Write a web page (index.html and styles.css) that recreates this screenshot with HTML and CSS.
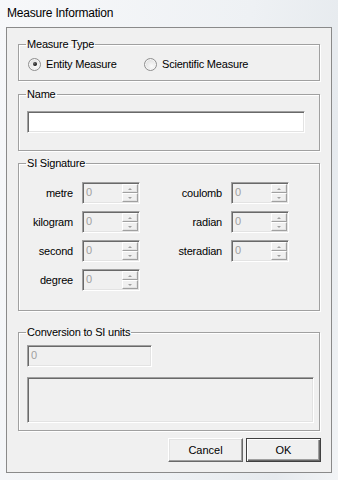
FILE: index.html
```html
<!DOCTYPE html>
<html lang="en">
<head>
    <meta charset="UTF-8">
    <title>Measure Information</title>
    <link rel="stylesheet" href="styles.css">
</head>
<body>
    <div class="window">
        <div class="titlebar">Measure Information</div>
        <div class="client">
            <fieldset class="group">
                <legend>Measure Type</legend>
                <div class="radios">
                    <label class="radio"><span class="radio-mark checked"></span>Entity Measure</label>
                    <label class="radio"><span class="radio-mark"></span>Scientific Measure</label>
                </div>
            </fieldset>

            <fieldset class="group group-name">
                <legend>Name</legend>
                <div class="textbox name-box"></div>
            </fieldset>

            <fieldset class="group group-si">
                <legend>SI Signature</legend>
                <div class="si-grid">
                    <span class="si-label">metre</span>
                    <div class="spin"><span class="spin-value">0</span><span class="spin-btns"><span class="spin-up"></span><span class="spin-down"></span></span></div>
                    <span class="si-label">coulomb</span>
                    <div class="spin"><span class="spin-value">0</span><span class="spin-btns"><span class="spin-up"></span><span class="spin-down"></span></span></div>

                    <span class="si-label">kilogram</span>
                    <div class="spin"><span class="spin-value">0</span><span class="spin-btns"><span class="spin-up"></span><span class="spin-down"></span></span></div>
                    <span class="si-label">radian</span>
                    <div class="spin"><span class="spin-value">0</span><span class="spin-btns"><span class="spin-up"></span><span class="spin-down"></span></span></div>

                    <span class="si-label">second</span>
                    <div class="spin"><span class="spin-value">0</span><span class="spin-btns"><span class="spin-up"></span><span class="spin-down"></span></span></div>
                    <span class="si-label">steradian</span>
                    <div class="spin"><span class="spin-value">0</span><span class="spin-btns"><span class="spin-up"></span><span class="spin-down"></span></span></div>

                    <span class="si-label">degree</span>
                    <div class="spin"><span class="spin-value">0</span><span class="spin-btns"><span class="spin-up"></span><span class="spin-down"></span></span></div>
                </div>
            </fieldset>

            <fieldset class="group group-conv">
                <legend>Conversion to SI units</legend>
                <div class="textbox disabled conv-value">0</div>
                <div class="textbox disabled conv-text"></div>
            </fieldset>

            <div class="buttons">
                <button class="btn">Cancel</button>
                <button class="btn btn-default">OK</button>
            </div>
        </div>
    </div>
</body>
</html>
```

FILE: styles.css
```css
body {
    margin: 0;
    padding: 0;
    font-family: "Liberation Sans", Arial, sans-serif;
    font-size: 11px;
    letter-spacing: -0.2px;
    color: #000;
}
.window {
    width: 338px;
    height: 480px;
    background: linear-gradient(100deg, #f7f8fa 0%, #eef1f4 60%, #e6eaee 85%, #f2f4f6 100%);
}
.titlebar {
    height: 27px;
    line-height: 26px;
    padding-left: 7px;
    font-size: 12px;
    letter-spacing: -0.2px;
}
.client {
    box-sizing: border-box;
    height: 446px;
    margin: 0 6px;
    padding: 10px 11px 0 11px;
    background: #f0f0f0;
    border: 1px solid #8a8a8a;
}
.group {
    margin: 0;
    padding: 0;
    border: 1px solid #a0a0a0;
    box-shadow: 1px 1px 0 #fff, inset 1px 1px 0 #fff;
    min-inline-size: 0;
}
.group legend {
    margin-left: 7px;
    padding: 0 1px;
    line-height: 13px;
    height: 13px;
}
.radios {
    display: grid;
    grid-template-columns: 116px auto;
    align-items: center;
    height: 26px;
    padding-left: 9px;
    margin-bottom: 3px;
}
.radio {
    display: flex;
    align-items: center;
    gap: 5px;
}
.radio-mark {
    position: relative;
    box-sizing: border-box;
    width: 13px;
    height: 13px;
    border-radius: 50%;
    border: 1px solid #8f8f8f;
    background: radial-gradient(circle at 60% 65%, #fbfbfb 0%, #e4e4e4 60%, #cfcfcf 100%);
    box-shadow: inset 0 0 0 1px #f6f6f6;
}
.radio-mark.checked::after {
    content: "";
    position: absolute;
    left: 3.5px;
    top: 3.5px;
    width: 4px;
    height: 4px;
    border-radius: 50%;
    background: radial-gradient(circle at 35% 35%, #6a6a6a, #111 70%);
}
.textbox {
    box-sizing: border-box;
    height: 22px;
    margin-left: 8px;
    background: #fff;
    border: 1px solid;
    border-color: #a0a0a0 #fff #fff #a0a0a0;
    box-shadow: inset 1px 1px 0 #696969, inset -1px -1px 0 #e3e3e3;
}
.textbox.disabled {
    background: #f0f0f0;
    color: #a0a0a0;
}
.name-box {
    width: 278px;
    margin-top: 10px;
    margin-bottom: 17px;
}
.si-grid {
    display: grid;
    grid-template-columns: 63px 58px 91px 58px;
    grid-auto-rows: 22px;
    row-gap: 7px;
    align-items: center;
    margin-top: 12px;
    margin-bottom: 19px;
}
.si-label {
    text-align: right;
    padding-right: 9px;
}
.spin {
    box-sizing: border-box;
    display: flex;
    height: 22px;
    background: #f0f0f0;
    border: 1px solid;
    border-color: #a0a0a0 #fff #fff #a0a0a0;
    box-shadow: inset 1px 1px 0 #696969, inset -1px -1px 0 #e3e3e3;
    padding: 1px;
}
.spin-value {
    flex: 1;
    color: #a0a0a0;
    padding-left: 2px;
    line-height: 17px;
}
.spin-btns {
    display: flex;
    flex-direction: column;
    width: 16px;
}
.spin-up, .spin-down {
    position: relative;
    flex: 1;
    box-sizing: border-box;
    background: #f0f0f0;
    border: 1px solid;
    border-color: #fff #a0a0a0 #a0a0a0 #fff;
    box-shadow: inset -1px -1px 0 #e3e3e3;
}
.spin-up::after, .spin-down::after {
    content: "";
    position: absolute;
    left: 5px;
    top: 3px;
    border-left: 2px solid transparent;
    border-right: 2px solid transparent;
}
.spin-up::after {
    border-bottom: 2px solid #a0a0a0;
}
.spin-down::after {
    border-top: 2px solid #a0a0a0;
}
.conv-value {
    width: 125px;
    margin-top: 6px;
    line-height: 19px;
    padding-left: 3px;
}
.conv-text {
    width: 287px;
    height: 46px;
    margin-top: 10px;
    margin-bottom: 7px;
}
.group-name {
    margin-top: 7px;
}
.group-si {
    margin-top: 6px;
}
.group-conv {
    margin-top: 15px;
}
.buttons {
    display: flex;
    justify-content: flex-end;
    gap: 3px;
    margin-top: 7px;
    margin-right: -1px;
}
.btn {
    box-sizing: border-box;
    width: 75px;
    height: 24px;
    padding: 0;
    font-family: "Liberation Sans", Arial, sans-serif;
    font-size: 11px;
    color: #000;
    background: #f0f0f0;
    border: 1px solid;
    border-color: #fff #696969 #696969 #fff;
    box-shadow: inset -1px -1px 0 #a0a0a0, inset 1px 1px 0 #e3e3e3;
}
.btn-default {
    border: 1px solid #404040;
    box-shadow: inset 1px 1px 0 #fff, inset -1px -1px 0 #696969, inset -2px -2px 0 #a0a0a0;
}
```
